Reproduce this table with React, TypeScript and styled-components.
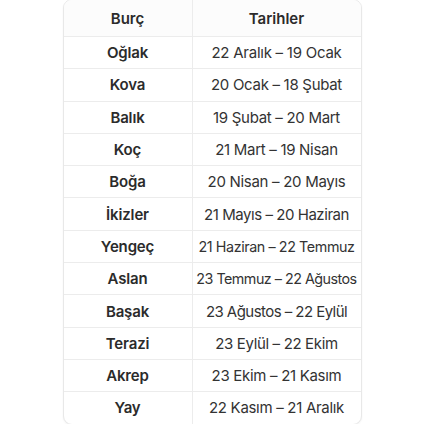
import React from "react";
import styled, { createGlobalStyle } from "styled-components";

const Global = createGlobalStyle`
  html, body { margin: 0; padding: 0; background: #ffffff; }
  body { font-family: Inter, "Noto Sans", sans-serif; }
`;

const Page = styled.div`
  width: 424px;
  height: 424px;
  display: flex;
  justify-content: center;
  align-items: flex-start;
  box-sizing: border-box;
`;

const Card = styled.div`
  width: 297px;
  border: 1px solid #e8e8e8;
  border-radius: 9px;
  overflow: hidden;
  box-shadow: 0 1px 2px rgba(0, 0, 0, 0.05);
  background: #fff;
  margin-top: -1px;
`;

const Table = styled.table`
  width: 100%;
  border-collapse: collapse;
  table-layout: fixed;
  color: #2f2f2f;
`;

const HeadCell = styled.th<{ $first?: boolean }>`
  height: 36px;
  padding: 0;
  font-size: 15px;
  font-weight: 600;
  text-align: center;
  color: #2b2b2b;
  background: #fcfcfc;
  white-space: nowrap;
  border-bottom: 1px solid #ececec;
  border-right: ${(p) => (p.$first ? "1px solid #ececec" : "none")};
  width: ${(p) => (p.$first ? "128px" : "auto")};
`;

const Cell = styled.td<{ $first?: boolean; $last?: boolean; $spacing?: number; $size?: number }>`
  height: 31.3px;
  padding: 0;
  font-size: ${(p) => p.$size ?? 15}px;
  font-weight: ${(p) => (p.$first ? 600 : 400)};
  text-align: center;
  white-space: nowrap;
  color: ${(p) => (p.$first ? "#2b2b2b" : "#333333")};
  border-bottom: ${(p) => (p.$last ? "none" : "1px solid #ececec")};
  border-right: ${(p) => (p.$first ? "1px solid #ececec" : "none")};
  letter-spacing: ${(p) => (p.$spacing ?? -0.15)}px;
`;

const rows: [string, string, number, number][] = [
  ["Oğlak", "22 Aralık – 19 Ocak", -0.25, 15],
  ["Kova", "20 Ocak – 18 Şubat", -0.3, 15],
  ["Balık", "19 Şubat – 20 Mart", -0.3, 15],
  ["Koç", "21 Mart – 19 Nisan", -0.3, 15],
  ["Boğa", "20 Nisan – 20 Mayıs", -0.3, 15],
  ["İkizler", "21 Mayıs – 20 Haziran", -0.45, 15],
  ["Yengeç", "21 Haziran – 22 Temmuz", -0.4, 14.3],
  ["Aslan", "23 Temmuz – 22 Ağustos", -0.5, 14.3],
  ["Başak", "23 Ağustos – 22 Eylül", -0.55, 15],
  ["Terazi", "23 Eylül – 22 Ekim", -0.35, 15],
  ["Akrep", "23 Ekim – 21 Kasım", -0.3, 15],
  ["Yay", "22 Kasım – 21 Aralık", -0.3, 15],
];

export default function App() {
  return (
    <>
      <Global />
      <Page>
        <Card>
          <Table>
            <thead>
              <tr>
                <HeadCell $first>Burç</HeadCell>
                <HeadCell>Tarihler</HeadCell>
              </tr>
            </thead>
            <tbody>
              {rows.map(([sign, dates, spacing, size], i) => (
                <tr key={sign}>
                  <Cell $first $last={i === rows.length - 1}>{sign}</Cell>
                  <Cell $last={i === rows.length - 1} $spacing={spacing} $size={size}>
                    {dates}
                  </Cell>
                </tr>
              ))}
            </tbody>
          </Table>
        </Card>
      </Page>
    </>
  );
}
